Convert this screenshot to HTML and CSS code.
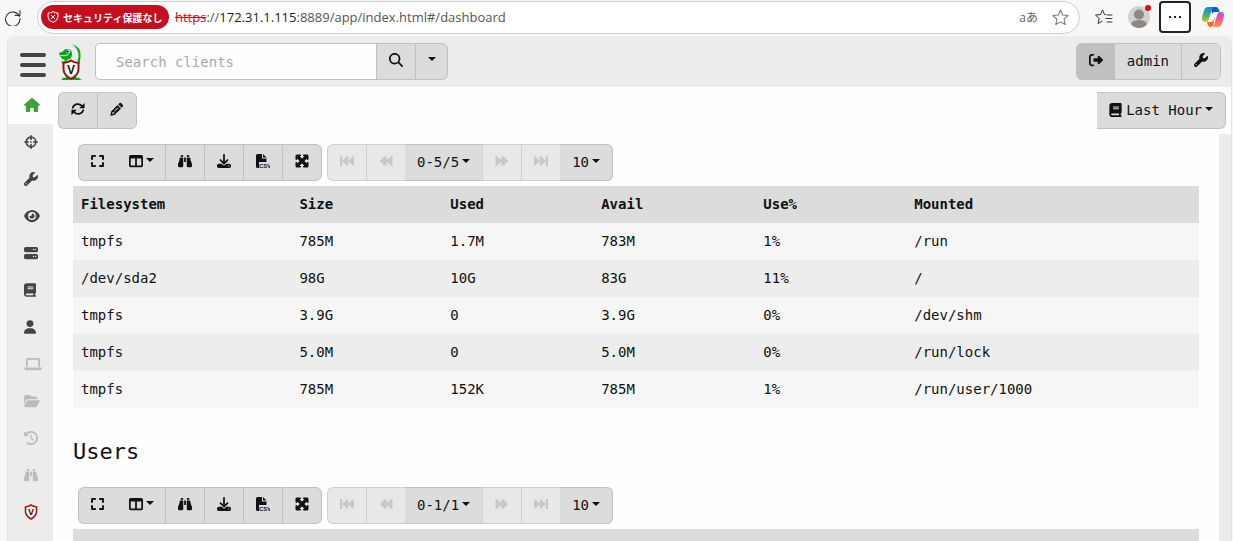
FILE: index.html
```
<!DOCTYPE html>
<html lang="en">
<head>
  <meta charset="UTF-8">
  <meta name="viewport" content="width=device-width, initial-scale=1.0">
  <title>Dashboard</title>
  <link rel="stylesheet" href="styles.css">
</head>
<body>
  <svg class="sprite" aria-hidden="true">
    <symbol id="home" viewBox="0 0 576 512"><path d="M575.8 255.5c0 18-15 32.1-32 32.1h-32l.7 160.2c0 2.7-.2 5.4-.5 8.1V472c0 22.1-17.9 40-40 40H392c-22.1 0-40-17.9-40-40v-88c0-17.7-14.3-32-32-32h-64c-17.7 0-32 14.3-32 32v88c0 22.1-17.9 40-40 40h-80c-22.1 0-40-17.9-40-40V287.6H32c-18 0-32-14-32-32.1 0-9 3-17 10-24L266.4 8c7-7 15-8 22-8s15 2 21 7l255.5 224.5c8 7 12 15 11 24z"/></symbol>
    <symbol id="crosshairs" viewBox="0 0 16 16"><g fill="none" stroke="currentColor" stroke-linecap="round"><circle cx="8" cy="8" r="5.5" stroke-width="1.9"/><path stroke-width="1.9" d="M8 1v4M8 11v4M1 8h4M11 8h4"/></g><circle cx="8" cy="8" r="1"/></symbol>
    <symbol id="wrench" viewBox="0 0 512 512"><path d="M352 320c88.400 0 160-71.600 160-160c0-15.300-2.200-30.100-6.200-44.200c-3.100-10.800-16.400-13.200-24.300-5.300l-76.800 76.800c-3 3-7.100 4.700-11.300 4.700H336c-8.800 0-16-7.200-16-16V118.600c0-4.200 1.700-8.300 4.700-11.300l76.800-76.800c7.900-7.900 5.400-21.200-5.300-24.300C382.100 2.200 367.300 0 352 0C263.600 0 192 71.600 192 160c0 19.100 3.400 37.500 9.500 54.500L19.900 396.100C7.200 408.800 0 426.100 0 444.100C0 481.600 30.400 512 67.900 512c18 0 35.300-7.200 48-19.900L297.500 310.500c17 6.200 35.400 9.500 54.500 9.500zM80 408a24 24 0 1 1 0 48 24 24 0 1 1 0-48z"/></symbol>
    <symbol id="eye" viewBox="0 0 576 512"><path d="M288 32c-80.800 0-145.500 36.800-192.600 80.600C48.600 156 17.300 208 2.500 243.700c-3.300 7.900-3.300 16.700 0 24.600C17.300 304 48.600 356 95.400 399.400C142.500 443.200 207.200 480 288 480s145.500-36.800 192.600-80.600c46.800-43.500 78.100-95.400 93-131.100c3.300-7.900 3.300-16.700 0-24.600c-14.900-35.700-46.200-87.700-93-131.100C433.500 68.800 368.800 32 288 32zM144 256a144 144 0 1 1 288 0 144 144 0 1 1-288 0zm144-64c0 35.300-28.700 64-64 64c-7.100 0-13.900-1.200-20.300-3.300c-5.500-1.800-11.900 1.600-11.700 7.400c.3 6.900 1.300 13.800 3.200 20.700c13.700 51.200 66.400 81.600 117.600 67.900s81.600-66.400 67.900-117.600c-11.100-41.500-47.800-69.400-88.600-71.100c-5.800-.2-9.200 6.100-7.400 11.700c2.100 6.400 3.300 13.200 3.300 20.300z"/></symbol>
    <symbol id="server" viewBox="0 0 512 512"><path d="M64 32C28.700 32 0 60.700 0 96v64c0 35.300 28.700 64 64 64H448c35.300 0 64-28.700 64-64V96c0-35.300-28.700-64-64-64H64zm280 72a24 24 0 1 1 0 48 24 24 0 1 1 0-48zm48 24a24 24 0 1 1 48 0 24 24 0 1 1-48 0zM64 288c-35.300 0-64 28.700-64 64v64c0 35.300 28.700 64 64 64H448c35.300 0 64-28.700 64-64V352c0-35.300-28.700-64-64-64H64zm280 72a24 24 0 1 1 0 48 24 24 0 1 1 0-48zm56 24a24 24 0 1 1 48 0 24 24 0 1 1-48 0z"/></symbol>
    <symbol id="book" viewBox="0 0 448 512"><path d="M96 0C43 0 0 43 0 96V416c0 53 43 96 96 96H416c17.700 0 32-14.300 32-32s-14.300-32-32-32V384c17.700 0 32-14.300 32-32V32c0-17.700-14.300-32-32-32H96zm0 384H352v64H96c-17.700 0-32-14.300-32-32s14.300-32 32-32zm32-240c0-8.800 7.200-16 16-16H336c8.800 0 16 7.200 16 16s-7.200 16-16 16H144c-8.800 0-16-7.200-16-16zm16 48H336c8.800 0 16 7.200 16 16s-7.200 16-16 16H144c-8.800 0-16-7.200-16-16s7.200-16 16-16z"/></symbol>
    <symbol id="user" viewBox="0 0 448 512"><path d="M224 256A128 128 0 1 0 224 0a128 128 0 1 0 0 256zm-45.700 48C79.800 304 0 383.800 0 482.300C0 498.700 13.300 512 29.700 512H418.300c16.400 0 29.700-13.300 29.700-29.700C448 383.800 368.200 304 269.700 304H178.300z"/></symbol>
    <symbol id="laptop" viewBox="0 0 640 512"><path d="M128 32C92.700 32 64 60.700 64 96V352h64V96H512V352h64V96c0-35.300-28.700-64-64-64H128zM19.200 384C8.600 384 0 392.600 0 403.200C0 445.600 34.400 480 76.800 480H563.200c42.400 0 76.800-34.400 76.800-76.800c0-10.600-8.600-19.200-19.200-19.200H19.200z"/></symbol>
    <symbol id="folder" viewBox="0 0 576 512"><path d="M88.700 223.800L0 375.800V96C0 60.700 28.700 32 64 32H181.500c17 0 33.300 6.700 45.300 18.700l26.500 26.500c12 12 28.300 18.700 45.300 18.700H416c35.300 0 64 28.700 64 64v32H144c-22.800 0-43.800 12.100-55.300 31.800zm27.600 16.100C122.100 230 132.600 224 144 224H544c11.500 0 22 6.100 27.700 16.100s5.700 22.200-.1 32.100l-112 192C453.900 474 443.400 480 432 480H32c-11.500 0-22-6.100-27.700-16.100s-5.700-22.200 .1-32.100l112-192z"/></symbol>
    <symbol id="history" viewBox="0 0 512 512"><path d="M75 75L41 41C25.900 25.900 0 36.600 0 57.900V168c0 13.300 10.700 24 24 24H134.100c21.400 0 32.100-25.900 17-41l-30.800-30.800C155 85.500 203 64 256 64c106 0 192 86 192 192s-86 192-192 192c-40.800 0-78.600-12.700-109.700-34.400c-14.500-10.100-34.400-6.600-44.600 7.900s-6.600 34.400 7.900 44.600C151.200 495 201.700 512 256 512c141.400 0 256-114.600 256-256S397.400 0 256 0C185.300 0 121.300 28.700 75 75zm181 53c-13.300 0-24 10.700-24 24V256c0 6.400 2.500 12.500 7 17l72 72c9.400 9.400 24.600 9.400 33.900 0s9.400-24.600 0-33.900l-65-65V152c0-13.300-10.700-24-24-24z"/></symbol>
    <symbol id="binoculars" viewBox="0 0 512 512"><path d="M128 32h32c17.700 0 32 14.300 32 32V96H96V64c0-17.700 14.300-32 32-32zm64 96V448c0 17.700-14.300 32-32 32H32c-17.700 0-32-14.300-32-32V388.900c0-34.600 9.400-68.600 27.200-98.300C40.900 267.800 49.700 242.400 53 216L60.500 156c2-16 15.600-28 31.800-28H192zm227.800 0c16.100 0 29.800 12 31.800 28L459 216c3.300 26.400 12.100 51.800 25.800 74.600c17.800 29.700 27.200 63.700 27.200 98.300V448c0 17.700-14.300 32-32 32H352c-17.700 0-32-14.300-32-32V128h99.800zM320 64c0-17.700 14.300-32 32-32h32c17.700 0 32 14.300 32 32V96H320V64zm-32 64V288H224V128h64z"/></symbol>
    <symbol id="search" viewBox="0 0 512 512"><path d="M416 208c0 45.900-14.900 88.300-40 122.700L502.600 457.400c12.500 12.500 12.500 32.800 0 45.300s-32.800 12.500-45.300 0L330.700 376c-34.400 25.200-76.800 40-122.700 40C93.100 416 0 322.900 0 208S93.100 0 208 0S416 93.100 416 208zM208 352a144 144 0 1 0 0-288 144 144 0 1 0 0 288z"/></symbol>
    <symbol id="signout" viewBox="0 0 512 512"><path d="M377.900 105.900L500.700 228.700c7.200 7.200 11.300 17.100 11.300 27.300s-4.100 20.100-11.300 27.300L377.900 406.100c-6.400 6.400-15 9.900-24 9.900c-18.700 0-33.900-15.200-33.900-33.900V320H192c-17.700 0-32-14.300-32-32v-64c0-17.700 14.300-32 32-32h128v-62.100c0-18.700 15.200-33.900 33.900-33.900c9 0 17.600 3.600 24 9.900zM160 96H96c-17.700 0-32 14.300-32 32v256c0 17.700 14.300 32 32 32h64c17.700 0 32 14.300 32 32s-14.300 32-32 32H96c-53 0-96-43-96-96V128C0 75 43 32 96 32h64c17.700 0 32 14.300 32 32s-14.300 32-32 32z"/></symbol>
    <symbol id="sync" viewBox="0 0 16 16"><path fill="none" stroke="currentColor" stroke-width="2" stroke-linecap="round" stroke-linejoin="round" d="M2 6.600C3.500 2.200 9 .800 12.500 4.500L14 6M14 9.400C12.500 13.800 7 15.200 3.500 11.500L2 10"/><path d="M15.500 1v6.200h-6.200zM.500 15V8.800h6.200z"/></symbol>
    <symbol id="pencil" viewBox="0 0 16 16"><path d="M10.700 1.300c1.300-1.700 5.300 2.300 4 4L13.400 6.700 9.300 2.600zM8.500 3.400l4.100 4.100-7.400 7.300L.3 15.800l1-5zM3 11.300l-.500 2.300 2.200-.500v-1.500zM8.900 6.200L4.700 10.400l.600.600 4.200-4.200z"/></symbol>
    <symbol id="expand" viewBox="0 0 14 14"><path fill="none" stroke="currentColor" stroke-width="2" stroke-linecap="round" stroke-linejoin="round" d="M1 5V2h3M9 2h3v3M12 9v3H9M4 12H1V9"/></symbol>
    <symbol id="columns" viewBox="0 0 512 512"><path d="M0 96C0 60.700 28.700 32 64 32H448c35.300 0 64 28.700 64 64V416c0 35.300-28.700 64-64 64H64c-35.300 0-64-28.700-64-64V96zm64 64V416H224V160H64zm384 0H288V416H448V160z"/></symbol>
    <symbol id="download" viewBox="0 0 512 512"><path d="M288 32c0-17.700-14.300-32-32-32s-32 14.300-32 32V274.700l-73.400-73.400c-12.500-12.500-32.800-12.500-45.300 0s-12.500 32.800 0 45.300l128 128c12.500 12.500 32.800 12.500 45.300 0l128-128c12.500-12.500 12.500-32.800 0-45.300s-32.800-12.500-45.300 0L288 274.700V32zM64 352c-35.300 0-64 28.700-64 64v32c0 35.300 28.700 64 64 64H448c35.300 0 64-28.700 64-64V416c0-35.300-28.700-64-64-64H346.500l-45.300 45.300c-25 25-65.500 25-90.500 0L165.500 352H64zm368 56a24 24 0 1 1 0 48 24 24 0 1 1 0-48z"/></symbol>
    <symbol id="csv" viewBox="0 0 14 14"><path d="M1.500 0H6v4.500h4.500V8H3v6H1.500Q0 14 0 12.500v-11Q0 0 1.500 0zM7 0l3.500 3.500H7z"/><text x="3" y="14" class="csv-text">CSV</text></symbol>
    <symbol id="arrows" viewBox="0 0 14 14"><path d="M1.500 1h4.200L4.500 2.700 7 5.200l2.500-2.500L8.300 1h4.200q.5 0 .5.500v4.200l-1.700-1.200L8.800 7l2.500 2.500L13 8.300v4.200q0 .5-.5.500H8.300l1.200-1.700L7 8.800l-2.500 2.500L5.700 13H1.500q-.5 0-.5-.5V8.300l1.700 1.200L5.200 7 2.700 4.500 1 5.700V1.500q0-.5.500-.5z" stroke="currentColor" stroke-width="1" stroke-linejoin="round"/></symbol>
    <symbol id="first" viewBox="0 0 14 14"><path d="M0 2h2v10H0zM8 2v10L2 7zM14 2v10L8 7z" stroke="currentColor" stroke-width=".5" stroke-linejoin="round"/></symbol>
    <symbol id="back" viewBox="0 0 14 14"><path d="M7 2v10L1 7zM13 2v10L7 7z" stroke="currentColor" stroke-linejoin="round"/></symbol>
    <symbol id="forward" viewBox="0 0 14 14"><path d="M1 2v10l6-5zM7 2v10l6-5z" stroke="currentColor" stroke-linejoin="round"/></symbol>
    <symbol id="last" viewBox="0 0 14 14"><path d="M0 2v10l6-5zM6 2v10l6-5zM12 2h2v10h-2z" stroke="currentColor" stroke-width=".5" stroke-linejoin="round"/></symbol>
  </svg>

  <div class="browser-bar">
    <button class="chrome-btn" aria-label="Reload"><svg viewBox="0 0 16 16" width="17" height="17" class="line"><path d="M14.500 7A6.800 6.800 0 1 0 15 9M15 1.500V6h-4.500"/></svg></button>
    <div class="address">
      <span class="insecure">
        <svg viewBox="0 0 12 12" width="12" height="12" class="line"><path d="M6 .700Q8.500 2.200 11 2.200v3.300q0 4-5 6-5-2-5-6V2.200Q3.500 2.200 6 .700zM4.300 4.300l3.400 3.400M7.700 4.300L4.300 7.700"/></svg>
        <span lang="ja">セキュリティ保護なし</span>
      </span>
      <span class="url"><s>https</s>://<b>172.31.1.115</b>:8889/app/index.html#/dashboard</span>
      <span class="translate" lang="ja">aあ</span>
      <svg class="line star" viewBox="0 0 16 16" width="17" height="17"><path d="M8 1l2.100 4.600 5 .6-3.700 3.400 1 5L8 12.100l-4.400 2.500 1-5L.900 6.200l5-.6z"/></svg>
    </div>
    <svg class="line fav" viewBox="0 0 18 16" width="18" height="16"><path d="M10.500 5.500h-1L7.500 1 5.500 5.500l-5 .6L4.200 9.500l-1 5L7 12.400M12 6h5M11 9.500h6M12 13h5"/></svg>
    <span class="profile">
      <svg viewBox="0 0 22 22" width="22" height="22"><circle cx="11" cy="11" r="11" fill="#d3d1ce"/><circle cx="11" cy="8.500" r="5" fill="#8c8885"/><path fill="#8c8885" d="M3 18q1.500-4 8-4t8 4q-3 4-8 4t-8-4z"/></svg>
    </span>
    <button class="more" aria-label="Settings and more"><i></i><i></i><i></i></button>
    <svg viewBox="0 0 22 20" width="22" height="20">
      <defs>
        <linearGradient id="cool" x1="0" y1="0" x2="0" y2="1"><stop offset="0" stop-color="#1686e8"/><stop offset=".6" stop-color="#42b86a"/><stop offset="1" stop-color="#e9c81c"/></linearGradient>
        <linearGradient id="warm" x1="0" y1="0" x2="0" y2="1"><stop offset="0" stop-color="#a05be8"/><stop offset=".5" stop-color="#ee5a8c"/><stop offset="1" stop-color="#ff9150"/></linearGradient>
      </defs>
      <path fill="#1557c8" d="M9 0h5q2 0 2.600 2l1 3h-5q-2 0-2.600 2z"/>
      <path fill="url(#cool)" d="M6 0h6q-1.500 0-2.200 2.500l-3 10Q6 15 4 15H3q-3 0-3-3 0-2 1-5l1.200-4Q3.200 0 6 0z"/>
      <path fill="#f6682c" d="M5 15h4q2 0 2.600-2l1.400-4-1.500 8q-.7 3-3 3-2 0-2.600-2z"/>
      <path fill="url(#warm)" d="M16 20h-6q1.500 0 2.200-2.500l3-10Q16 5 18 5h1q3 0 3 3 0 2-1 5l-1.200 4q-1 3-3.800 3z"/>
    </svg>
  </div>

  <div class="app">
    <header class="navbar">
      <button class="hamburger" aria-label="Toggle menu"><i></i><i></i><i></i></button>
      <a class="logo" href="#/welcome" aria-label="Home">
        <svg viewBox="0 0 24 38" width="24" height="38">
          <path fill="#09a80e" d="M12.500 1Q23 4 21.500 14l-1 7h-2.500l1.500-7Q20 5 12.500 1z"/>
          <path fill="#09a80e" d="M0 10l4-1.500Q5 5.500 8 6q5 0 5 5 0 5-4 5.500L7 18q6-1 10 1l-2 4-9 1-3-4-.500-2 2.500.500 1-1.500Q2.500 16 1 13z"/>
          <circle cx="9" cy="8.500" r="2" fill="#fff"/><circle cx="8.500" cy="8.500" r="1.200"/>
          <path stroke="#fff" stroke-width=".8" d="M1.500 12.500q5 1 8-1" fill="none"/>
          <path fill="#09a80e" d="M2 37l2-1.500-1-1 3 .500 2-2 3 4zM23 37l-3-1.500 1-1-3 .500-2-2-3 4z"/>
          <path fill="#fff" stroke="#a81010" stroke-width="2" d="M12 17.500q3.500 2.500 7.500 2.500v6q0 6-7.500 10-7.500-4-7.500-10v-6q4 0 7.500-2.500z"/>
          <text x="12" y="31" class="logo-v">V</text>
        </svg>
      </a>
      <form class="search">
        <input type="text" placeholder="Search clients" aria-label="Search clients">
        <button type="button" class="btn" aria-label="Search"><svg class="icon"><use href="#search"/></svg></button>
        <button type="button" class="btn narrow" aria-label="Search options"><span class="caret"></span></button>
      </form>
      <div class="btn-group push">
        <button class="btn dark" aria-label="Log out"><svg class="icon"><use href="#signout"/></svg></button>
        <button class="btn text no-left">admin</button>
        <button class="btn" aria-label="Settings"><svg class="icon"><use href="#wrench"/></svg></button>
      </div>
    </header>

    <div class="body">
      <nav class="sidebar">
        <a href="#/dashboard" class="active" aria-label="Dashboard"><svg class="wide"><use href="#home"/></svg></a>
        <a href="#/hunts" aria-label="Hunts"><svg><use href="#crosshairs"/></svg></a>
        <a href="#/artifacts" aria-label="Artifacts"><svg><use href="#wrench"/></svg></a>
        <a href="#/events" aria-label="Server events"><svg class="wide"><use href="#eye"/></svg></a>
        <a href="#/collected" aria-label="Server artifacts"><svg><use href="#server"/></svg></a>
        <a href="#/notebooks" aria-label="Notebooks"><svg class="slim"><use href="#book"/></svg></a>
        <a href="#/users" aria-label="Users"><svg class="slim"><use href="#user"/></svg></a>
        <a href="#/host" class="disabled" aria-label="Host"><svg class="widest"><use href="#laptop"/></svg></a>
        <a href="#/vfs" class="disabled" aria-label="Files"><svg class="wide"><use href="#folder"/></svg></a>
        <a href="#/history" class="disabled" aria-label="History"><svg><use href="#history"/></svg></a>
        <a href="#/client-events" class="disabled" aria-label="Client events"><svg><use href="#binoculars"/></svg></a>
        <a href="#/docs" aria-label="Documentation">
          <svg class="badge" viewBox="0 0 14 16"><path fill="#fff" stroke="#b01010" stroke-width="1.600" d="M7 1q2.500 1.500 5.500 2v4.500q0 4.500-5.500 7.500-5.500-3-5.500-7.500V3Q4.500 2.500 7 1z"/><text x="7" y="11" class="shield-v">V</text></svg>
        </a>
      </nav>

      <main>
        <div class="page-tools">
          <div class="btn-group">
            <button class="btn" aria-label="Refresh"><svg class="icon"><use href="#sync"/></svg></button>
            <button class="btn" aria-label="Edit"><svg class="icon"><use href="#pencil"/></svg></button>
          </div>
          <button class="btn text range"><svg class="icon"><use href="#book"/></svg>Last Hour<span class="caret"></span></button>
        </div>

        <div class="scroller">
          <div class="content">
            <div class="toolbar">
              <div class="btn-group">
                <button class="btn" aria-label="Fullscreen"><svg class="icon"><use href="#expand"/></svg></button>
                <button class="btn wide-btn no-left" aria-label="Columns"><svg class="icon"><use href="#columns"/></svg><span class="caret"></span></button>
                <button class="btn" aria-label="Inspect"><svg class="icon"><use href="#binoculars"/></svg></button>
                <button class="btn" aria-label="Download JSON"><svg class="icon"><use href="#download"/></svg></button>
                <button class="btn" aria-label="Download CSV"><svg class="icon"><use href="#csv"/></svg></button>
                <button class="btn" aria-label="Expand"><svg class="icon"><use href="#arrows"/></svg></button>
              </div>
              <div class="btn-group">
                <button class="btn" disabled aria-label="First page"><svg class="icon"><use href="#first"/></svg></button>
                <button class="btn" disabled aria-label="Previous page"><svg class="icon"><use href="#back"/></svg></button>
                <button class="btn text no-left">0-5/5<span class="caret"></span></button>
                <button class="btn" disabled aria-label="Next page"><svg class="icon"><use href="#forward"/></svg></button>
                <button class="btn" disabled aria-label="Last page"><svg class="icon"><use href="#last"/></svg></button>
                <button class="btn text no-left">10<span class="caret"></span></button>
              </div>
            </div>
            <table>
              <thead>
                <tr><th class="col-fs">Filesystem</th><th class="col-num">Size</th><th class="col-num">Used</th><th class="col-avail">Avail</th><th class="col-num">Use%</th><th>Mounted</th></tr>
              </thead>
              <tbody>
                <tr><td>tmpfs</td><td>785M</td><td>1.7M</td><td>783M</td><td>1%</td><td>/run</td></tr>
                <tr><td>/dev/sda2</td><td>98G</td><td>10G</td><td>83G</td><td>11%</td><td>/</td></tr>
                <tr><td>tmpfs</td><td>3.9G</td><td>0</td><td>3.9G</td><td>0%</td><td>/dev/shm</td></tr>
                <tr><td>tmpfs</td><td>5.0M</td><td>0</td><td>5.0M</td><td>0%</td><td>/run/lock</td></tr>
                <tr><td>tmpfs</td><td>785M</td><td>152K</td><td>785M</td><td>1%</td><td>/run/user/1000</td></tr>
              </tbody>
            </table>

            <h2>Users</h2>
            <div class="toolbar">
              <div class="btn-group">
                <button class="btn" aria-label="Fullscreen"><svg class="icon"><use href="#expand"/></svg></button>
                <button class="btn wide-btn no-left" aria-label="Columns"><svg class="icon"><use href="#columns"/></svg><span class="caret"></span></button>
                <button class="btn" aria-label="Inspect"><svg class="icon"><use href="#binoculars"/></svg></button>
                <button class="btn" aria-label="Download JSON"><svg class="icon"><use href="#download"/></svg></button>
                <button class="btn" aria-label="Download CSV"><svg class="icon"><use href="#csv"/></svg></button>
                <button class="btn" aria-label="Expand"><svg class="icon"><use href="#arrows"/></svg></button>
              </div>
              <div class="btn-group">
                <button class="btn" disabled aria-label="First page"><svg class="icon"><use href="#first"/></svg></button>
                <button class="btn" disabled aria-label="Previous page"><svg class="icon"><use href="#back"/></svg></button>
                <button class="btn text no-left">0-1/1<span class="caret"></span></button>
                <button class="btn" disabled aria-label="Next page"><svg class="icon"><use href="#forward"/></svg></button>
                <button class="btn" disabled aria-label="Last page"><svg class="icon"><use href="#last"/></svg></button>
                <button class="btn text no-left">10<span class="caret"></span></button>
              </div>
            </div>
            <div class="table-head"></div>
          </div>
          <div class="scroll-track"></div>
        </div>
      </main>
    </div>
  </div>
</body>
</html>
```
FILE: styles.css
```
* {
  box-sizing: border-box;
}
body {
  margin: 0;
  height: 100vh;
  display: flex;
  flex-direction: column;
  overflow: hidden;
  background: #f7f7f7;
  color: #111;
  font-family: "DejaVu Sans Mono", monospace;
  font-size: 14px;
}
button {
  font: inherit;
  color: inherit;
  cursor: pointer;
}
svg {
  flex: none;
  fill: currentColor;
}
.sprite {
  display: none;
}
.line {
  fill: none;
  stroke: currentColor;
  stroke-width: 1;
  stroke-linecap: round;
  stroke-linejoin: round;
}

/* browser chrome */
.browser-bar {
  flex: none;
  height: 36px;
  display: flex;
  align-items: center;
  padding: 0 9px 2px 4px;
  color: #333;
  font-family: "Open Sans", "Noto Sans CJK JP", sans-serif;
  font-size: 13px;
}
.chrome-btn {
  display: flex;
  border: 0;
  padding: 0;
  width: 33px;
  background: none;
}
.address {
  flex: 1;
  height: 33px;
  display: flex;
  align-items: center;
  border: 1px solid #ccc;
  border-radius: 17px;
  background: #fff;
  padding: 0 10px 0 3px;
}
.insecure {
  display: flex;
  align-items: center;
  gap: 4px;
  height: 24px;
  width: 128px;
  padding-left: 6px;
  border-radius: 12px;
  background: #c50f1f;
  color: #fff;
  font-family: "Noto Sans CJK JP", sans-serif;
  font-size: 10px;
  font-weight: bold;
  white-space: nowrap;
}
.url {
  flex: 1;
  margin-left: 6px;
  color: #555;
}
.url b {
  font-weight: normal;
  color: #222;
}
.url s {
  color: #c50f1f;
}
.translate {
  color: #666;
  font-size: 12px;
  margin-right: 14px;
}
.star {
  color: #777;
}
.fav {
  margin: 0 15px;
}
.profile {
  position: relative;
  display: flex;
}
.profile::after {
  content: "";
  position: absolute;
  top: -1px;
  right: -1px;
  width: 6px;
  height: 6px;
  border-radius: 50%;
  background: #e30b0b;
}
.more {
  width: 32px;
  height: 32px;
  margin: 0 11px 0 9px;
  border: 2px solid #222;
  border-radius: 4px;
  background: #fff;
  padding: 0;
  display: flex;
  align-items: center;
  justify-content: center;
  gap: 3px;
}
.more i {
  width: 2px;
  height: 2px;
  background: #222;
}

/* app */
.app {
  flex: 1;
  min-height: 0;
  display: flex;
  flex-direction: column;
  margin: 0 1px 0 7px;
  border: 1px solid #e4e4e4;
  border-width: 0 1px;
  border-radius: 8px 8px 0 0;
  background: #fefefe;
  overflow: hidden;
}
.navbar {
  flex: none;
  height: 51px;
  display: flex;
  align-items: center;
  background: #ececec;
  padding: 0 10px 0 12px;
}
.hamburger {
  display: flex;
  flex-direction: column;
  gap: 6px;
  width: 26px;
  padding: 7px 0 0;
  border: 0;
  background: none;
}
.hamburger i {
  height: 4px;
  border-radius: 2px;
  background: #444;
}
.logo {
  display: flex;
  margin: 0 12px 0 13px;
}
.logo-v,
.shield-v {
  font: bold 12px "Liberation Sans", sans-serif;
  text-anchor: middle;
  fill: #111;
}
.shield-v {
  font-size: 9px;
}
.csv-text {
  font: bold 6px "Liberation Sans", sans-serif;
}
.search {
  display: flex;
}
.search input {
  width: 281px;
  height: 37px;
  border: 1px solid #c0c0c0;
  border-right: 0;
  border-radius: 5px 0 0 5px;
  padding: 0 20px;
  background: #fefefe;
  font: inherit;
}
.search input::placeholder {
  color: #aaa;
}
.btn {
  display: flex;
  align-items: center;
  justify-content: center;
  height: 37px;
  width: 39px;
  padding: 0 0 3px;
  border: 1px solid #c0c0c0;
  border-right-width: 0;
  background: #dcdcdc;
}
.btn:last-child {
  width: 40px;
  border-right-width: 1px;
  border-radius: 0 6px 6px 0;
}
.btn-group .btn:first-child {
  border-radius: 6px 0 0 6px;
}
.btn:disabled {
  background: #e8e8e8;
  border-color: #d0d0d0;
  color: #c8c8c8;
}
.btn.no-left {
  border-left-width: 0;
}
.btn.dark {
  background: #c0c0c0;
}
.btn.wide-btn {
  width: 48px;
}
.btn.narrow:last-child {
  width: 33px;
}
.btn.text,
.btn.text:last-child {
  width: auto;
  padding: 0 12px 1px;
}
.btn-group {
  display: flex;
}
.push {
  margin-left: auto;
}
.icon {
  width: 14px;
  height: 14px;
}
.caret {
  margin: 0 0 2px 3px;
  border: 4px solid transparent;
  border-top-color: currentColor;
  border-bottom: 0;
}
.narrow .caret {
  margin-left: 0;
}
.body {
  flex: 1;
  min-height: 0;
  display: flex;
}
.sidebar {
  width: 45px;
  background: #ececec;
}
.sidebar a {
  display: flex;
  align-items: center;
  height: 37px;
  padding: 0 0 2px 16px;
  color: #444;
}
.sidebar .active {
  background: #fefefe;
  color: #3f9f3f;
}
.sidebar .disabled {
  color: #bbb;
}
.sidebar svg {
  width: 14px;
  height: 14px;
}
.sidebar .wide {
  width: 16px;
}
.sidebar .widest {
  width: 18px;
}
.sidebar .slim {
  width: 12px;
}
.sidebar .badge {
  height: 16px;
}
main {
  flex: 1;
  min-width: 0;
  display: flex;
  flex-direction: column;
}
.page-tools {
  flex: none;
  display: flex;
  justify-content: space-between;
  padding: 5px;
}
.btn.range {
  border-left-width: 0;
}
.range .icon {
  width: 13px;
  margin-right: 4px;
}
.scroller {
  flex: 1;
  min-height: 0;
  display: flex;
}
.content {
  flex: 1;
  min-width: 0;
  padding: 10px 20px 0;
  overflow: hidden;
}
.scroll-track {
  width: 12px;
  background: #ececec;
}
.toolbar {
  display: flex;
  gap: 5px;
  padding: 0 5px 5px;
}
table {
  width: 100%;
  table-layout: fixed;
  border-collapse: collapse;
}
th,
td {
  height: 37px;
  padding: 0 8px 2px;
  text-align: left;
}
th,
.table-head {
  background: #dcdcdc;
}
.table-head {
  height: 37px;
}
tbody tr {
  background: #f6f6f6;
}
tbody tr:nth-child(even) {
  background: #ededed;
}
.col-fs {
  width: 19.4%;
}
.col-num {
  width: 13.4%;
}
.col-avail {
  width: 14.4%;
}
h2 {
  margin: 30px 0 21px;
  font-size: 22px;
  font-weight: normal;
  line-height: 28px;
}
```
